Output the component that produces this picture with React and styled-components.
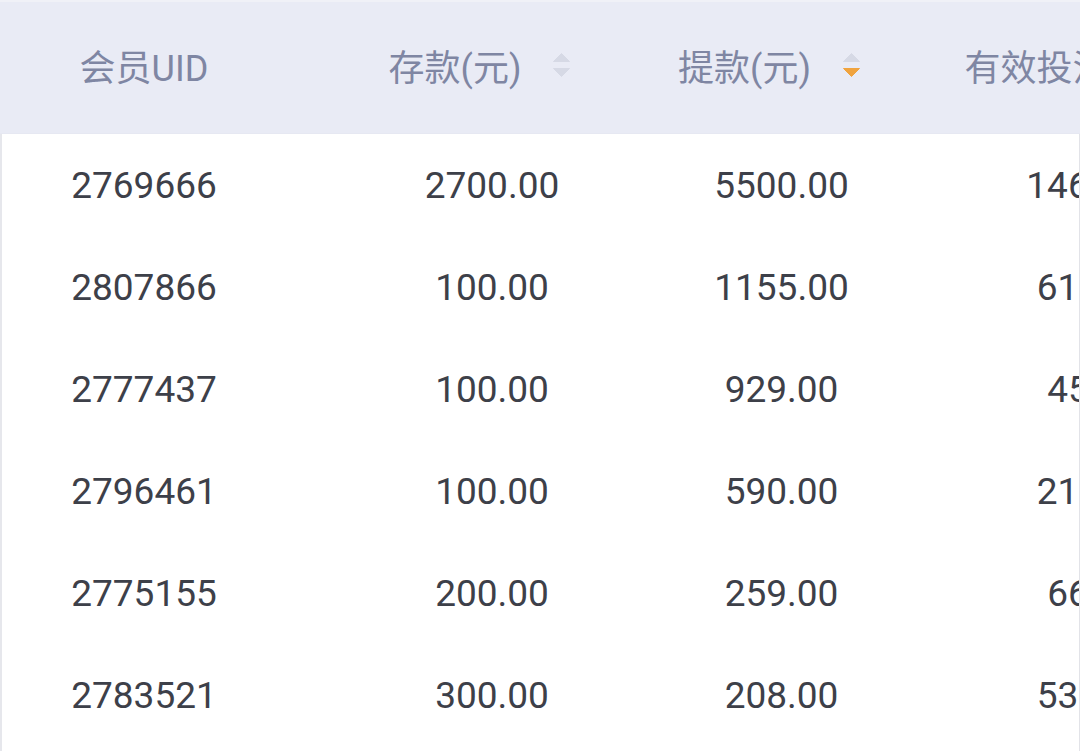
import React from "react";
import styled, { createGlobalStyle } from "styled-components";

const Global = createGlobalStyle`
  html, body { margin: 0; padding: 0; background: #ffffff; }
  body { font-family: Roboto, "Noto Sans CJK SC", sans-serif; }
`;

const COLS = "288px 408px 171px 474px";

const Table = styled.div`
  width: 1080px;
  height: 751px;
  overflow: hidden;
  background: #ffffff;
`;

const Head = styled.div`
  display: grid;
  grid-template-columns: ${COLS};
  height: 131px;
  background: #e9ebf5;
  border-top: 2px solid #f0f1f7;
  border-bottom: 1px solid #e6e8f2;
`;

const HeadCell = styled.div`
  display: flex;
  align-items: center;
  justify-content: center;
  padding-right: ${(p) => (p.$sortable ? "25px" : "0")};
  padding-bottom: 6px;
  font-size: 36px;
  color: #7f86a3;
  white-space: nowrap;
`;

const SortIcon = styled.span`
  display: inline-flex;
  flex-direction: column;
  gap: 6px;
  margin-left: 32px;
`;

const Body = styled.div`
  border-left: 2px solid #e6e7ec;
  border-right: 1px solid #e2e3e8;
  overflow: hidden;
  height: 617px;
`;

const Row = styled.div`
  display: grid;
  grid-template-columns: ${COLS};
  height: 102px;
  margin-left: -2px;
`;

const Cell = styled.div`
  display: flex;
  align-items: center;
  justify-content: center;
  font-size: 37px;
  color: #3d4049;
  white-space: nowrap;
`;

const Tri = ({ up, color }) => (
  <svg width="17" height="9" viewBox="0 0 17 9">
    <path
      d={up ? "M8.5 0.5 L16.5 8.5 L0.5 8.5 Z" : "M0.5 0.5 L16.5 0.5 L8.5 8.5 Z"}
      fill={color}
      stroke={color}
      strokeLinejoin="round"
      strokeWidth="1"
    />
  </svg>
);

const Sorter = ({ active }) => (
  <SortIcon>
    <Tri up color="#d6d9e5" />
    <Tri color={active === "desc" ? "#f0a33e" : "#d6d9e5"} />
  </SortIcon>
);

const rows = [
  ["2769666", "2700.00", "5500.00", "14652.80"],
  ["2807866", "100.00", "1155.00", "6125.50"],
  ["2777437", "100.00", "929.00", "458.00"],
  ["2796461", "100.00", "590.00", "2130.00"],
  ["2775155", "200.00", "259.00", "660.00"],
  ["2783521", "300.00", "208.00", "5320.00"],
];

export default function App() {
  return (
    <>
      <Global />
      <Table>
        <Head>
          <HeadCell>会员UID</HeadCell>
          <HeadCell $sortable>
            存款(元)
            <Sorter />
          </HeadCell>
          <HeadCell $sortable>
            提款(元)
            <Sorter active="desc" />
          </HeadCell>
          <HeadCell $sortable>
            有效投注(元)
            <Sorter />
          </HeadCell>
        </Head>
        <Body>
          {rows.map((r) => (
            <Row key={r[0]}>
              {r.map((v, i) => (
                <Cell key={i}>{v}</Cell>
              ))}
            </Row>
          ))}
        </Body>
      </Table>
    </>
  );
}
